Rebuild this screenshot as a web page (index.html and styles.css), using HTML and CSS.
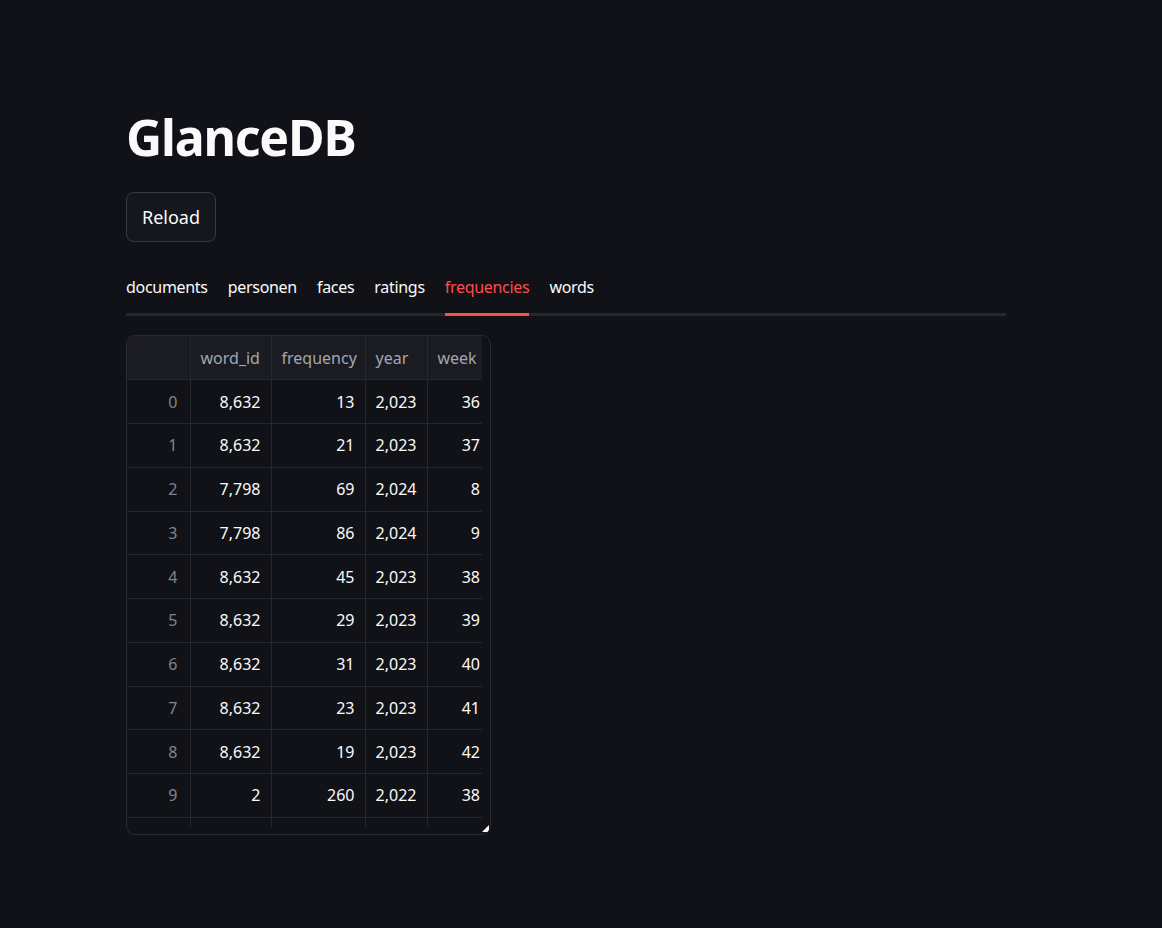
FILE: index.html
```
<!DOCTYPE html>
<html>
<head>
<meta charset="utf-8">
<link rel="stylesheet" href="styles.css">
</head>
<body>
<main class="main">
  <h1 class="title">GlanceDB</h1>
  <button class="btn">Reload</button>
  <nav class="tabs">
    <span class="tab">documents</span>
    <span class="tab">personen</span>
    <span class="tab">faces</span>
    <span class="tab">ratings</span>
    <span class="tab active">frequencies</span>
    <span class="tab">words</span>
  </nav>
  <div class="grid-wrap">
    <div class="grid">
      <table>
        <colgroup><col class="c0"><col class="c1"><col class="c2"><col class="c3"><col class="c4"></colgroup>
        <thead>
          <tr><th></th><th>word_id</th><th>frequency</th><th>year</th><th>week</th></tr>
        </thead>
        <tbody>
          <tr><td class="idx">0</td><td>8,632</td><td>13</td><td>2,023</td><td>36</td></tr>
          <tr><td class="idx">1</td><td>8,632</td><td>21</td><td>2,023</td><td>37</td></tr>
          <tr><td class="idx">2</td><td>7,798</td><td>69</td><td>2,024</td><td>8</td></tr>
          <tr><td class="idx">3</td><td>7,798</td><td>86</td><td>2,024</td><td>9</td></tr>
          <tr><td class="idx">4</td><td>8,632</td><td>45</td><td>2,023</td><td>38</td></tr>
          <tr><td class="idx">5</td><td>8,632</td><td>29</td><td>2,023</td><td>39</td></tr>
          <tr><td class="idx">6</td><td>8,632</td><td>31</td><td>2,023</td><td>40</td></tr>
          <tr><td class="idx">7</td><td>8,632</td><td>23</td><td>2,023</td><td>41</td></tr>
          <tr><td class="idx">8</td><td>8,632</td><td>19</td><td>2,023</td><td>42</td></tr>
          <tr><td class="idx">9</td><td>2</td><td>260</td><td>2,022</td><td>38</td></tr>
          <tr><td class="idx"></td><td></td><td></td><td></td><td></td></tr>
        </tbody>
      </table>
    </div>
    <span class="resize"></span>
  </div>
</main>
</body>
</html>
```
FILE: styles.css
```
html, body {
  margin: 0;
  padding: 0;
  background: #111217;
  color: #fafafa;
  font-family: "Noto Sans", "Open Sans", sans-serif;
}
.main {
  width: 880px;
  margin-left: 126px;
  padding-top: 102px;
  display: flex;
  flex-direction: column;
  align-items: flex-start;
}
.title {
  margin: 0;
  font-size: 50px;
  font-weight: 700;
  line-height: 70px;
  letter-spacing: -1.2px;
}
.btn {
  margin-top: 20px;
  width: 90px;
  height: 50px;
  background: #15171e;
  border: 1px solid #3a3c44;
  border-radius: 8px;
  color: #fafafa;
  font-family: inherit;
  font-size: 18px;
  padding: 0;
}
.tabs {
  margin-top: 24px;
  width: 880px;
  display: flex;
  gap: 20px;
  border-bottom: 3px solid #27282e;
}
.tab {
  font-size: 16px;
  line-height: 24px;
  padding-top: 9px;
  padding-bottom: 14px;
  margin-bottom: -3px;
  border-bottom: 3px solid transparent;
  letter-spacing: -0.3px;
}
.tab.active {
  color: #ff4b4b;
  border-bottom-color: #ff4b4b;
}
.grid-wrap {
  position: relative;
  margin-top: 19px;
  width: 363px;
  height: 498px;
  border: 1px solid #2a2b31;
  border-radius: 9px;
  overflow: hidden;
}
.grid {
  width: 355px;
  height: 491px;
  overflow: hidden;
}
table {
  border-collapse: collapse;
  table-layout: fixed;
  width: 356px;
  font-size: 16px;
}
.c0 { width: 63px; }
.c1 { width: 81px; }
.c2 { width: 94px; }
.c3 { width: 62px; }
.c4 { width: 56px; }
th, td {
  height: 43.75px;
  padding: 0 10px;
  box-sizing: border-box;
  border-right: 1px solid #26272d;
  border-bottom: 1px solid #26272d;
  white-space: nowrap;
  overflow: hidden;
}
th {
  background: #1b1c22;
  color: #a3a6af;
  font-weight: 400;
  text-align: left;
}
td {
  text-align: right;
  color: #fafafa;
}
td.idx {
  color: #80848e;
  padding-right: 12px;
}
th:last-child, td:last-child {
  border-right: none;
  padding-right: 3px;
}
.resize {
  position: absolute;
  right: 1px;
  bottom: 2px;
  width: 0;
  height: 0;
  border-left: 7px solid transparent;
  border-bottom: 7px solid #fafafa;
}
```
